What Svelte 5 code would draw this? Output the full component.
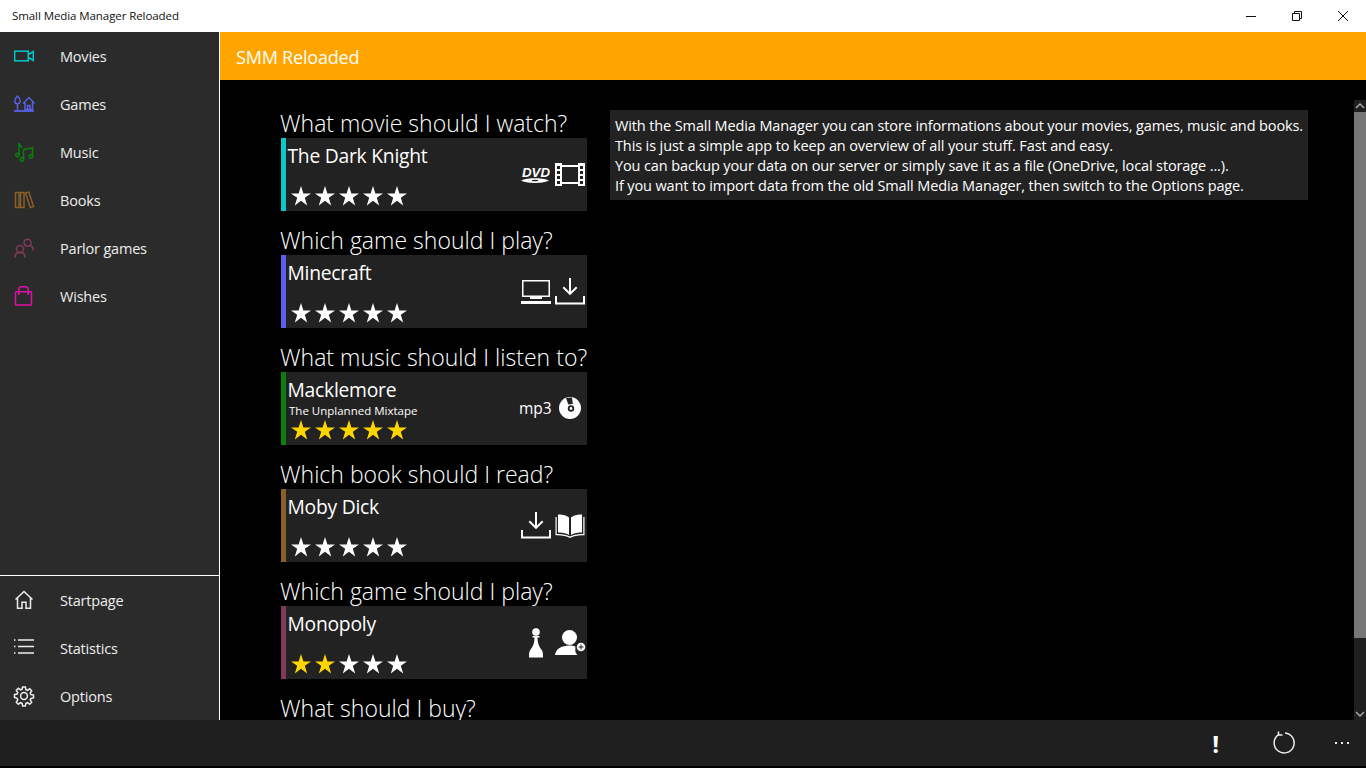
<script lang="ts">
  interface Pick {
    question: string
    title: string
    subtitle?: string
    color: string
    gold: number
    icons: string[]
  }

  const topNav = [
    { label: 'Movies', icon: 'camera', color: '#00c8c8' },
    { label: 'Games', icon: 'place', color: '#5a5fe8' },
    { label: 'Music', icon: 'notes', color: '#0a800a' },
    { label: 'Books', icon: 'shelf', color: '#8a6028' },
    { label: 'Parlor games', icon: 'people', color: '#7f3a58' },
    { label: 'Wishes', icon: 'bag', color: '#e010a8' },
  ]

  const bottomNav = [
    { label: 'Startpage', icon: 'home', color: '#eee' },
    { label: 'Statistics', icon: 'list', color: '#eee' },
    { label: 'Options', icon: 'gear', color: '#eee' },
  ]

  const picks: Pick[] = [
    { question: 'What movie should I watch?', title: 'The Dark Knight', color: '#0cc8c8', gold: 0, icons: ['dvd', 'film'] },
    { question: 'Which game should I play?', title: 'Minecraft', color: '#5a5ff0', gold: 0, icons: ['monitor', 'download'] },
    { question: 'What music should I listen to?', title: 'Macklemore', subtitle: 'The Unplanned Mixtape', color: '#0a800a', gold: 5, icons: ['mp3', 'disc'] },
    { question: 'Which book should I read?', title: 'Moby Dick', color: '#8a6028', gold: 0, icons: ['download', 'book'] },
    { question: 'Which game should I play?', title: 'Monopoly', color: '#7f3a58', gold: 2, icons: ['pawn', 'user'] },
  ]

  const intro = [
    'With the Small Media Manager you can store informations about your movies, games, music and books.',
    'This is just a simple app to keep an overview of all your stuff. Fast and easy.',
    'You can backup your data on our server or simply save it as a file (OneDrive, local storage ...).',
    'If you want to import data from the old Small Media Manager, then switch to the Options page.',
  ]

  const gearPath = 'M8.6 1h2.8l.5 2.6 1.6.7 2.2-1.5 2 2-1.5 2.2.7 1.6 2.6.5v2.8l-2.6.5-.7 1.6 1.5 2.2-2 2-2.2-1.5-1.6.7-.5 2.6H8.6l-.5-2.6-1.6-.7-2.2 1.5-2-2 1.5-2.2-.7-1.6L.5 11.4V8.6l2.6-.5.7-1.6-1.5-2.2 2-2 2.2 1.5 1.6-.7z'
</script>

{#snippet navIcon(name: string, color: string)}
  <svg class="nav-icon" viewBox="0 0 20 20" fill="none" stroke={color} stroke-width="1.5">
    {#if name === 'camera'}
      <rect x="0.7" y="5.2" width="13.6" height="9.6" />
      <path d="M14.5 8.500l4.800-3v9l-4.800-3" />
    {:else if name === 'place'}
      <path d="M3.500 2c1.700 1.800 2.800 3.400 2.800 4.900a2.800 2.800 0 0 1-5.600 0C.7 5.400 1.800 3.800 3.500 2zM3.500 9.500v6.500" />
      <path d="M9 9.500l6-6 5.500 6M11 8v7.500h7.500V8M13.500 15.500v-4h2.500v4" />
      <path d="M0 17h20" stroke-width="1.800" />
    {:else if name === 'notes'}
      <path d="M5 13V1c.3 1.800 2.600 2.600 2.600 5" />
      <circle cx="3.400" cy="13" r="1.700" />
      <path d="M9.500 7.500l9-1.500v8.500M9.500 7.500v10" />
      <circle cx="8" cy="17.500" r="1.700" />
      <circle cx="17" cy="14.500" r="1.700" />
    {:else if name === 'shelf'}
      <rect x="1.500" y="2.500" width="3.500" height="15" />
      <rect x="6.500" y="2.500" width="3.500" height="15" />
      <path d="M11.500 3l3.300-.9 4.800 14.500-3.300 1z" />
    {:else if name === 'people'}
      <circle cx="13.500" cy="4.800" r="3.500" />
      <circle cx="6" cy="11" r="3.500" />
      <path d="M10.500 7.500c.6-.6 1-.8 1.400-1M16.500 7.500c1.800.7 2.600 2.500 2.800 5M1 19.500c0-3 1.900-5 5-5s5 2 5 5" />
    {:else if name === 'bag'}
      <rect x="1.500" y="5.800" width="16" height="13.200" rx="0.800" />
      <path d="M4.800 9V3.400A2.600 2.600 0 0 1 7.400.8h4.200a2.600 2.600 0 0 1 2.600 2.600V9" />
    {:else if name === 'home'}
      <path d="M1.500 9.500L10 1.500l8.500 8M3.500 8v10.300h4.500v-6h4v6h4.500V8" />
    {:else if name === 'list'}
      <path d="M4 2h16M4 8.500h16M4 15h16" />
      <path d="M0 2h1.500M0 8.500h1.500M0 15h1.500" />
    {:else if name === 'gear'}
      <path d={gearPath} />
      <circle cx="10" cy="10" r="3.400" />
    {/if}
  </svg>
{/snippet}

{#snippet cardIcon(name: string)}
  {#if name === 'mp3'}
    <span class="mp3">mp3</span>
  {:else}
    <svg class="card-icon" viewBox="0 0 30 30" fill="#fff" stroke="none">
      {#if name === 'dvd'}
        <text x="1" y="17" class="dvd-text" textLength="28" lengthAdjust="spacingAndGlyphs">DVD</text>
        <path d="M0 20.500c3-1.800 10-2.300 14-2.300s11 .5 14 2.300c-3 1.800-10 2.500-14 2.500S3 22.300 0 20.500z" />
        <ellipse cx="14" cy="20.500" rx="3.500" ry="0.800" fill="#222" />
      {:else if name === 'film'}
        <path fill-rule="evenodd" d="M0 3h7v2h16V3h7v23h-7v-2H7v2H0zM7 7v15h16V7zM2 6v3h3V6zM2 11v3h3v-3zM2 16v3h3v-3zM2 21v3h3v-3zM25 6v3h3V6zM25 11v3h3v-3zM25 16v3h3v-3zM25 21v3h3v-3z" />
      {:else if name === 'monitor'}
        <path fill-rule="evenodd" d="M1 3h28v17H1zM2.500 4.500v14h25v-14zM9 20h12v2H9zM0 24h30v3H0z" />
      {:else if name === 'download'}
        <path d="M14 1h2v13.500l5-5 1.400 1.400L15 18.300l-7.400-7.400L9 9.500l5 5zM0 19h2v6.500h26V19h2v8.500H0z" />
      {:else if name === 'book'}
        <path d="M14 6.500c-2.500-2.300-7-3.300-11-3v18c4-.3 8.500.5 11 2.500zM16 6.500c2.500-2.300 7-3.300 11-3v18c-4-.3-8.500.5-11 2.500z" />
        <path d="M.5 6h1.200v17c4.500-.3 9.800.5 13.300 2.500 3.500-2 8.800-2.800 13.300-2.500V6h1.200v18.300c-5-.4-10.500.4-14.500 2.600-4-2.200-9.500-3-14.500-2.600z" />
      {:else if name === 'disc'}
        <circle cx="15" cy="14" r="11" />
        <path d="M11 4l6-.5 .8 6.500-4.500.6z" fill="#222" />
        <circle cx="16" cy="14.500" r="3.200" fill="#222" />
        <circle cx="16" cy="14.500" r="1.400" />
      {:else if name === 'pawn'}
        <circle cx="15" cy="4" r="3.800" />
        <path d="M11.500 8h7v1.500h-2c0 7 2.500 10 4.500 13 1 1.500 1 4 1 7H8c0-3 0-5.500 1-7 2-3 4.500-6 4.500-13h-2z" />
      {:else if name === 'user'}
        <circle cx="14.500" cy="9.500" r="7.500" />
        <path d="M0 27c1-6 6-9.500 14.500-9.500 3 0 5 .5 7 1.500-1 1-1.500 3-1 5 .3 1 1 2 2 3z" />
        <circle cx="26" cy="19" r="5" stroke="#222" stroke-width="1.500" />
        <path d="M23.500 18.500h5v1h-5zM25.500 16.500h1v5h-1z" fill="#222" />
      {/if}
    </svg>
  {/if}
{/snippet}

<div class="window">
  <header class="titlebar">
    <span class="app-title">Small Media Manager Reloaded</span>
    <div class="controls">
      <svg viewBox="0 0 10 10" class="ctl"><path d="M0 5.500h10" /></svg>
      <svg viewBox="0 0 10 10" class="ctl"><path d="M.5 2.500h7v7h-7zM2.500 2.500v-2h7v7h-2" /></svg>
      <svg viewBox="0 0 10 10" class="ctl"><path d="M0 0l10 10M10 0L0 10" /></svg>
    </div>
  </header>

  <div class="middle">
    <nav class="sidebar">
      <ul class="nav-list">
        {#each topNav as item}
          <li>{@render navIcon(item.icon, item.color)}<span>{item.label}</span></li>
        {/each}
      </ul>
      <ul class="nav-list bottom">
        {#each bottomNav as item}
          <li>{@render navIcon(item.icon, item.color)}<span>{item.label}</span></li>
        {/each}
      </ul>
    </nav>

    <main class="main">
      <div class="page-head">SMM Reloaded</div>
      <div class="scroller">
        <div class="content">
          <section class="picks">
            {#each picks as pick}
              <h2>{pick.question}</h2>
              <article class="card">
                <div class="bar" style="background: {pick.color}"></div>
                <div class="card-body">
                  <div class="card-title">{pick.title}</div>
                  {#if pick.subtitle}
                    <div class="card-sub">{pick.subtitle}</div>
                  {/if}
                  <div class="stars">
                    {#each [0, 1, 2, 3, 4] as n}
                      <svg viewBox="0 0 20 20" class="star" fill={n < pick.gold ? '#ffd700' : '#fff'}>
                        <path d="M10 0l2.400 7.400H20l-6.200 4.400 2.400 7.600L10 14.700l-6.200 4.700 2.400-7.600L0 7.400h7.600z" />
                      </svg>
                    {/each}
                  </div>
                </div>
                <div class="card-icons">
                  {#each pick.icons as icon}
                    {@render cardIcon(icon)}
                  {/each}
                </div>
              </article>
            {/each}
            <h2>What should I buy?</h2>
          </section>
          <aside class="intro">
            {#each intro as line}
              <p>{line}</p>
            {/each}
          </aside>
        </div>
        <div class="scrollbar">
          <svg viewBox="0 0 12 12" class="arrow"><path d="M2 8l4-4 4 4" /></svg>
          <div class="thumb"></div>
          <svg viewBox="0 0 12 12" class="arrow"><path d="M2 4l4 4 4-4" /></svg>
        </div>
      </div>
    </main>
  </div>

  <footer class="commands">
    <span class="warn">!</span>
    <svg viewBox="0 0 24 24" class="refresh" fill="none" stroke="#eee" stroke-width="1.500">
      <path d="M6.500 3.700A10 10 0 1 0 13 2" />
      <path d="M6.500 0.500v3.500h4" />
    </svg>
    <span class="dots"><i></i><i></i><i></i></span>
  </footer>
  <div class="edge"></div>
</div>

<style>
  :global(body) {
    margin: 0;
    background: #000;
  }

  .window {
    height: 768px;
    display: flex;
    flex-direction: column;
    overflow: hidden;
    font-family: "Open Sans", "Noto Sans", sans-serif;
    color: #fff;
  }

  .titlebar {
    height: 32px;
    flex: none;
    background: #fff;
    color: #111;
    display: flex;
    align-items: center;
    justify-content: space-between;
  }

  .app-title {
    margin: 0 0 2px 12px;
    font-size: 11.500px;
    letter-spacing: -0.080px;
  }

  .controls {
    display: flex;
    gap: 36px;
    margin-right: 18px;
  }

  .ctl {
    width: 10px;
    height: 10px;
    fill: none;
    stroke: #111;
    stroke-width: 1;
    overflow: visible;
  }

  .middle {
    flex: 1;
    display: flex;
    min-height: 0;
  }

  .sidebar {
    width: 219px;
    flex: none;
    background: #2b2b2b;
    border-right: 1px solid #fff;
    display: flex;
    flex-direction: column;
    justify-content: space-between;
  }

  .nav-list {
    list-style: none;
    margin: 0;
    padding: 0;
  }

  .nav-list.bottom {
    border-top: 1px solid #fff;
  }

  .nav-list li {
    height: 48px;
    display: flex;
    align-items: center;
    padding-left: 14px;
    font-size: 14.500px;
    letter-spacing: -0.200px;
    color: #eee;
  }

  .nav-icon {
    width: 20px;
    height: 20px;
    margin-right: 26px;
    flex: none;
    overflow: visible;
  }

  .main {
    flex: 1;
    min-width: 0;
    display: flex;
    flex-direction: column;
    background: #000;
  }

  .page-head {
    height: 47px;
    flex: none;
    background: #ffa500;
    display: flex;
    align-items: center;
    padding: 1px 0 0 16px;
    font-size: 18px;
    letter-spacing: -0.200px;
  }

  .scroller {
    flex: 1;
    min-height: 0;
    margin-top: 20px;
    display: flex;
    overflow: hidden;
  }

  .content {
    flex: 1;
    min-width: 0;
    display: flex;
    align-items: flex-start;
    padding: 10px 46px 0 60px;
    gap: 23px;
  }

  .picks {
    width: 307px;
    flex: none;
  }

  h2 {
    margin: 0;
    height: 28px;
    line-height: 26px;
    font-size: 23px;
    font-weight: 300;
    letter-spacing: 0.020px;
    white-space: nowrap;
  }

  .card {
    margin: 0 0 16px 1px;
    height: 73px;
    background: #222;
    display: flex;
  }

  .bar {
    width: 5px;
    flex: none;
  }

  .card-body {
    flex: 1;
    display: flex;
    flex-direction: column;
    padding-left: 2px;
  }

  .card-title {
    margin: 5px 0 0 -0.500px;
    height: 26px;
    line-height: 26px;
    font-size: 19.300px;
    letter-spacing: -0.250px;
  }

  .card-sub {
    margin-left: 1px;
    font-size: 11.500px;
    line-height: 16px;
  }

  .stars {
    margin-top: auto;
    margin-bottom: 5px;
    margin-left: 3px;
    display: flex;
    gap: 4px;
  }

  .star {
    width: 20px;
    height: 20px;
  }

  .card-icons {
    flex: none;
    display: flex;
    gap: 4px;
    padding: 22px 2px 0 0;
    align-items: flex-start;
    justify-content: flex-end;
  }

  .card-icon {
    width: 30px;
    height: 30px;
    overflow: visible;
  }

  .dvd-text {
    font-family: "Liberation Sans", sans-serif;
    font-size: 13px;
    font-weight: 700;
    font-style: italic;
  }

  .mp3 {
    width: 32px;
    line-height: 28px;
    font-size: 15.500px;
  }

  .intro {
    flex: 1;
    background: #222;
    padding: 6px 5px 4px;
    font-size: 14.500px;
    line-height: 20px;
    letter-spacing: -0.120px;
    white-space: nowrap;
  }

  .intro p {
    margin: 0;
  }

  .scrollbar {
    width: 12px;
    flex: none;
    background: #1f1f1f;
    display: flex;
    flex-direction: column;
  }

  .arrow {
    width: 12px;
    height: 12px;
    flex: none;
    fill: none;
    stroke: #aaa;
    stroke-width: 1.500;
  }

  .thumb {
    height: 526px;
    background: #777;
    margin-bottom: auto;
  }

  .commands {
    height: 46px;
    flex: none;
    background: #1f1f1f;
    display: flex;
    align-items: center;
    justify-content: flex-end;
    padding-right: 17px;
    position: relative;
    z-index: 1;
  }

  .warn {
    font-size: 24px;
    font-weight: 700;
    margin-right: 53px;
  }

  .refresh {
    width: 24px;
    height: 24px;
    margin-right: 39px;
  }

  .dots {
    display: flex;
    gap: 4px;
  }

  .dots i {
    width: 2px;
    height: 2px;
    background: #eee;
  }

  .edge {
    height: 2px;
    flex: none;
    background: #000;
  }
</style>
